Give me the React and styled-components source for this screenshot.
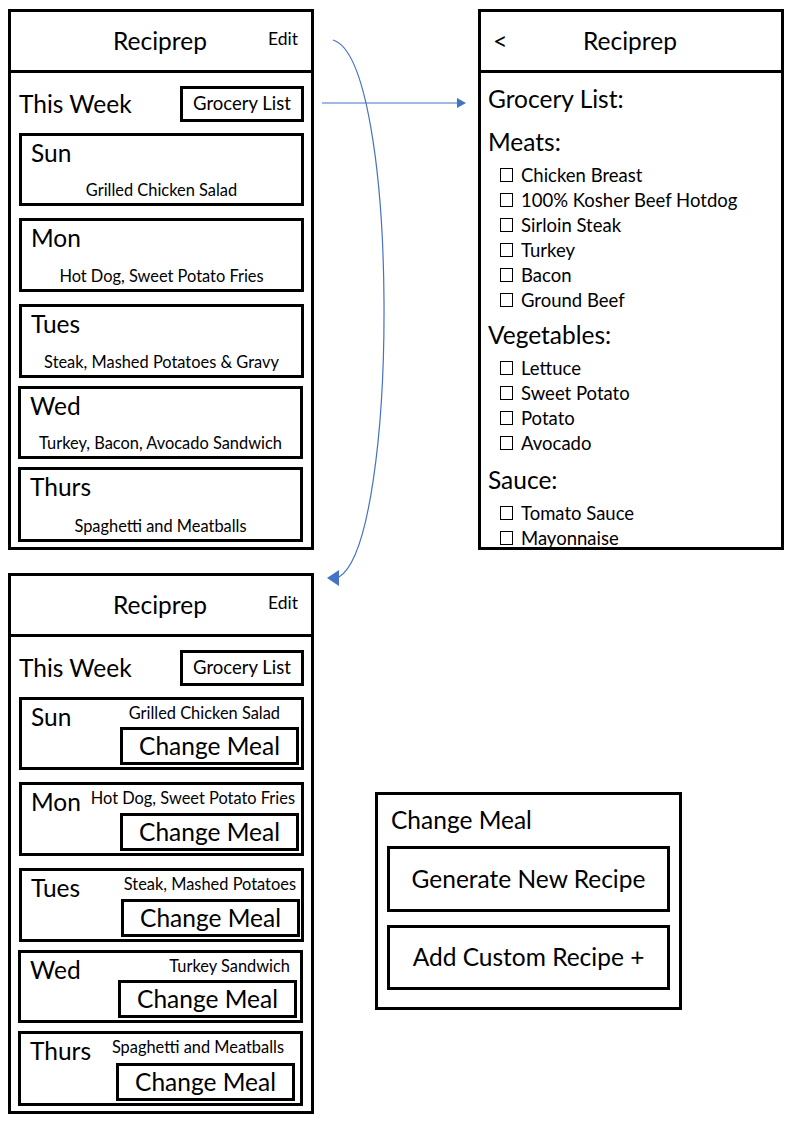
import React from 'react';
import styled, { createGlobalStyle } from 'styled-components';

const Global = createGlobalStyle`
  html, body { margin: 0; padding: 0; background: #fff; }
  body { font-family: Lato, "Open Sans", "Liberation Sans", sans-serif; color: #000; }
  * { box-sizing: border-box; }
`;

const Canvas = styled.div`
  position: relative;
  width: 796px;
  height: 1123px;
  overflow: hidden;
  background: #fff;
`;

const Frame = styled.section`
  position: absolute;
  left: ${p => p.$x}px;
  top: ${p => p.$y}px;
  width: ${p => p.$w}px;
  height: ${p => p.$h}px;
  border: 3px solid #000;
  display: flex;
  flex-direction: column;
  overflow: hidden;
  background: #fff;
`;

const Header = styled.header`
  flex: none;
  height: 61px;
  border-bottom: 3px solid #000;
  display: grid;
  grid-template-columns: 1fr auto 1fr;
  align-items: center;
  padding: 0 13px 0 11px;
`;

const Title = styled.h1`
  margin: 0;
  font-size: 24.5px;
  font-weight: 400;
  line-height: 30px;
`;

const Edit = styled.span`
  justify-self: end;
  font-size: 17.5px;
  line-height: 22px;
  padding-bottom: 4px;
`;

const Back = styled.span`
  justify-self: start;
  font-size: 25px;
  line-height: 28px;
  padding-left: 1px;
  padding-bottom: 2px;
`;

const WeekBody = styled.div`
  flex: 1;
  padding: 13px 7px 0 8px;
  display: flex;
  flex-direction: column;
`;

const WeekRow = styled.div`
  display: flex;
  justify-content: space-between;
  align-items: center;
  height: 36px;
`;

const Heading = styled.h2`
  margin: 0;
  font-size: 24.5px;
  font-weight: 400;
  line-height: 30px;
`;

const GroceryButton = styled.div`
  width: 124px;
  height: 36px;
  border: 3px solid #000;
  display: flex;
  align-items: center;
  justify-content: center;
  font-size: 18.5px;
  padding-bottom: 2px;
`;

const DayList = styled.div`
  display: flex;
  flex-direction: column;
  margin-top: 11px;
`;

const DayCard = styled.div`
  height: ${p => p.$h}px;
  margin-top: ${p => p.$mt}px;
  margin-left: ${p => p.$ml}px;
  margin-right: ${p => p.$mr}px;
  border: 3px solid #000;
  display: flex;
  flex-direction: ${p => (p.$row ? 'row' : 'column')};
  padding: ${p => (p.$row ? '0 0 2px 9px' : '2px 9px 4px 9px')};
`;

const DayName = styled.div`
  font-size: 24.5px;
  line-height: 28px;
  flex: none;
  padding-top: ${p => (p.$row ? 3 : 1)}px;
`;

const Meal = styled.div`
  margin-top: auto;
  text-align: center;
  font-size: 16.4px;
  line-height: 18px;
`;

const RightCol = styled.div`
  flex: 1;
  display: flex;
  flex-direction: column;
  align-items: flex-end;
  justify-content: space-between;
`;

const MealSmall = styled.div`
  font-size: 16.4px;
  line-height: 18px;
  padding-top: 4px;
  padding-right: ${p => p.$pr}px;
  white-space: nowrap;
`;

const ChangeButton = styled.div`
  width: 179px;
  height: 38px;
  margin-right: ${p => p.$mr}px;
  border: 3px solid #000;
  display: flex;
  align-items: center;
  justify-content: center;
  font-size: 24.5px;
  padding-bottom: 2px;
`;

const GroceryBody = styled.div`
  flex: 1;
  padding: 11px 7px 0 7px;
`;

const SectionTitle = styled.h3`
  margin: ${p => p.$mt}px 0 0;
  font-size: 24.5px;
  font-weight: 400;
  line-height: 30px;
`;

const ItemList = styled.ul`
  list-style: none;
  margin: 5px 0 0;
  padding: 0 0 0 12px;
`;

const Item = styled.li`
  display: flex;
  align-items: center;
  height: 25px;
  font-size: 18.5px;
  gap: 8px;
`;

const Box = styled.span`
  width: 13px;
  height: 14px;
  border: 1.5px solid #000;
  flex: none;
`;

const PopupBody = styled.div`
  padding: 9px 9px 0;
  display: flex;
  flex-direction: column;
`;

const PopupTitle = styled.div`
  font-size: 24.5px;
  line-height: 32px;
  padding-left: 4px;
  margin-bottom: 10px;
`;

const PopupButton = styled.div`
  height: ${p => p.$h}px;
  margin-top: ${p => p.$mt}px;
  border: 3px solid #000;
  display: flex;
  align-items: center;
  justify-content: center;
  font-size: 24.5px;
  padding-bottom: 2px;
`;

const Arrows = styled.svg`
  position: absolute;
  left: 0;
  top: 0;
  pointer-events: none;
`;

const days = [
  { d: 'Sun', m: 'Grilled Chicken Salad', s: 'Grilled Chicken Salad', h: 73, mt: 0, ml: 0, mr: 0, pr: 21, br: 2 },
  { d: 'Mon', m: 'Hot Dog, Sweet Potato Fries', s: 'Hot Dog, Sweet Potato Fries', h: 74, mt: 12, ml: 0, mr: 0, pr: 6, br: 2 },
  { d: 'Tues', m: 'Steak, Mashed Potatoes & Gravy', s: 'Steak, Mashed Potatoes', h: 74, mt: 12, ml: 0, mr: 0, pr: 5, br: 1 },
  { d: 'Wed', m: 'Turkey, Bacon, Avocado Sandwich', s: 'Turkey Sandwich', h: 73, mt: 8, ml: -1, mr: 1, pr: 10, br: 3 },
  { d: 'Thurs', m: 'Spaghetti and Meatballs', s: 'Spaghetti and Meatballs', h: 75, mt: 8, ml: -1, mr: 1, pr: 16, br: 5 },
];

const grocery = [
  { t: 'Meats:', mt: 13, items: ['Chicken Breast', '100% Kosher Beef Hotdog', 'Sirloin Steak', 'Turkey', 'Bacon', 'Ground Beef'] },
  { t: 'Vegetables:', mt: 8, items: ['Lettuce', 'Sweet Potato', 'Potato', 'Avocado'] },
  { t: 'Sauce:', mt: 10, items: ['Tomato Sauce', 'Mayonnaise'] },
];

function WeekScreen({ x, y, editing }) {
  return (
    <Frame $x={x} $y={y} $w={306} $h={541}>
      <Header>
        <span />
        <Title>Reciprep</Title>
        <Edit>Edit</Edit>
      </Header>
      <WeekBody>
        <WeekRow>
          <Heading>This Week</Heading>
          <GroceryButton>Grocery List</GroceryButton>
        </WeekRow>
        <DayList>
          {days.map(day =>
            editing ? (
              <DayCard key={day.d} $row $h={day.h} $mt={day.mt} $ml={day.ml} $mr={day.mr}>
                <DayName $row>{day.d}</DayName>
                <RightCol>
                  <MealSmall $pr={day.pr}>{day.s}</MealSmall>
                  <ChangeButton $mr={day.br}>Change Meal</ChangeButton>
                </RightCol>
              </DayCard>
            ) : (
              <DayCard key={day.d} $h={day.h} $mt={day.mt} $ml={day.ml} $mr={day.mr}>
                <DayName>{day.d}</DayName>
                <Meal>{day.m}</Meal>
              </DayCard>
            )
          )}
        </DayList>
      </WeekBody>
    </Frame>
  );
}

function GroceryScreen() {
  return (
    <Frame $x={478} $y={9} $w={306} $h={541}>
      <Header>
        <Back>&lt;</Back>
        <Title>Reciprep</Title>
        <span />
      </Header>
      <GroceryBody>
        <SectionTitle $mt={0}>Grocery List:</SectionTitle>
        {grocery.map(sec => (
          <React.Fragment key={sec.t}>
            <SectionTitle $mt={sec.mt}>{sec.t}</SectionTitle>
            <ItemList>
              {sec.items.map(it => (
                <Item key={it}>
                  <Box />
                  {it}
                </Item>
              ))}
            </ItemList>
          </React.Fragment>
        ))}
      </GroceryBody>
    </Frame>
  );
}

function ChangeMealPopup() {
  return (
    <Frame $x={375} $y={792} $w={307} $h={218}>
      <PopupBody>
        <PopupTitle>Change Meal</PopupTitle>
        <PopupButton $h={66} $mt={0}>Generate New Recipe</PopupButton>
        <PopupButton $h={65} $mt={13}>Add Custom Recipe +</PopupButton>
      </PopupBody>
    </Frame>
  );
}

export default function App() {
  return (
    <>
      <Global />
      <Canvas>
        <WeekScreen x={8} y={9} />
        <GroceryScreen />
        <WeekScreen x={8} y={573} editing />
        <ChangeMealPopup />
        <Arrows width="796" height="1123" viewBox="0 0 796 1123">
          <line x1="322" y1="103" x2="458" y2="103" stroke="#4472C4" strokeWidth="1.2" />
          <polygon points="466,103 457,98 457,108" fill="#4472C4" />
          <path d="M333 40 C400 60 400 540 339 577" fill="none" stroke="#4472C4" strokeWidth="1.2" />
          <polygon points="327,578 339,570 339,586" fill="#4472C4" />
        </Arrows>
      </Canvas>
    </>
  );
}
